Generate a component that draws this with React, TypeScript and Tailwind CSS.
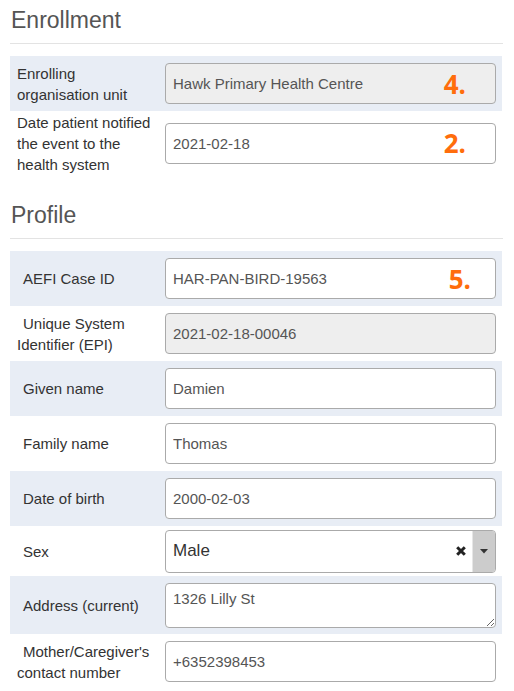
import React from "react";

const F = { fontFamily: '"Liberation Sans", Arial, sans-serif' };

function Badge({ n, right }: { n: string; right: string }) {
  return (
    <span
      className={`pointer-events-none absolute top-1/2 -translate-y-1/2 ${right} text-[26px] font-bold leading-none text-[#ff6d0c]`}
      style={{ fontFamily: '"Open Sans", sans-serif' }}
    >
      {n}
    </span>
  );
}

function TextInput({ value, disabled, badge, badgeRight }: { value: string; disabled?: boolean; badge?: string; badgeRight?: string }) {
  return (
    <div className="relative w-[331px]">
      <input
        readOnly
        value={value}
        className={`block h-[41px] w-full rounded-[4px] border border-[#aaaaaa] px-[7px] text-[15px] text-[#555555] outline-none ${disabled ? "bg-[#eeeeee]" : "bg-white"}`}
        style={F}
      />
      {badge && <Badge n={badge} right={badgeRight ?? "right-[30px]"} />}
    </div>
  );
}

function Row({ label, shade, indent, h, children }: { label: React.ReactNode; shade?: boolean; indent?: boolean; h: string; children: React.ReactNode }) {
  return (
    <div className={`flex items-center ${h} ${shade ? "bg-[#e8edf5]" : "bg-white"}`}>
      <div className={`w-[155px] pl-[7px] pr-1 text-[15px] leading-[21px] text-[#333333] ${indent ? "indent-[6px]" : ""}`} style={F}>
        {label}
      </div>
      {children}
    </div>
  );
}

function Heading({ text, mt }: { text: string; mt: string }) {
  return (
    <div className={mt}>
      <div className="pl-[1px] text-[23px] leading-[26px] text-[#555555]" style={F}>
        {text}
      </div>
      <div className="mt-[10px] h-px w-[493px] bg-[#e3e3e3]" />
    </div>
  );
}

export default function App() {
  return (
    <div className="min-h-[691px] w-[514px] bg-white px-[10px]" style={F}>
      <Heading text="Enrollment" mt="pt-[7px]" />
      <div className="mt-[12px] w-[492px]">
        <Row label={<>Enrolling<br />organisation unit</>} shade h="h-[55px]">
          <TextInput value="Hawk Primary Health Centre" disabled badge="4." />
        </Row>
        <Row label={<>Date patient notified<br />the event to the<br />health system</>} h="h-[64px]">
          <TextInput value="2021-02-18" badge="2." />
        </Row>
      </div>

      <Heading text="Profile" mt="mt-[27px]" />
      <div className="mt-[12px] w-[492px]">
        <Row label="AEFI Case ID" shade indent h="h-[55px]">
          <TextInput value="HAR-PAN-BIRD-19563" badge="5." badgeRight="right-[25px]" />
        </Row>
        <Row label={<>Unique System<br />Identifier (EPI)</>} indent h="h-[55px]">
          <TextInput value="2021-02-18-00046" disabled />
        </Row>
        <Row label="Given name" shade indent h="h-[55px]">
          <TextInput value="Damien" />
        </Row>
        <Row label="Family name" indent h="h-[55px]">
          <TextInput value="Thomas" />
        </Row>
        <Row label="Date of birth" shade indent h="h-[55px]">
          <TextInput value="2000-02-03" />
        </Row>
        <Row label="Sex" indent h="h-[50px]">
          <div className="flex h-[43px] w-[331px] items-stretch overflow-hidden rounded-[4px] border border-[#aaaaaa] bg-white">
            <div className="flex flex-1 items-center pl-[7px] text-[17px] text-[#333333]">Male</div>
            <div className="flex w-[22px] items-center justify-center">
              <svg width="10" height="10" viewBox="0 0 10 10">
                <path d="M1.2 1.2 L8.8 8.8 M8.8 1.2 L1.2 8.8" stroke="#222" strokeWidth="3" strokeLinecap="butt" />
              </svg>
            </div>
            <div className="flex w-[23px] items-center justify-center border-l border-[#e6e6e6] bg-[#cccccc]">
              <svg width="8" height="5" viewBox="0 0 8 5">
                <path d="M0 0 L8 0 L4 4.5 Z" fill="#333" />
              </svg>
            </div>
          </div>
        </Row>
        <Row label="Address (current)" shade indent h="h-[58px]">
          <textarea
            readOnly
            value="1326 Lilly St"
            className="block h-[45px] w-[331px] rounded-[4px] border border-[#aaaaaa] bg-white px-[7px] pt-[5px] text-[15px] leading-[20px] text-[#555555] outline-none"
            style={F}
          />
        </Row>
        <Row label={<>Mother/Caregiver's<br />contact number</>} indent h="h-[55px]">
          <TextInput value="+6352398453" />
        </Row>
      </div>
    </div>
  );
}
